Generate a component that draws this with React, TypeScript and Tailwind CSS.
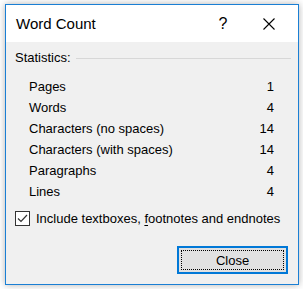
import * as React from "react"

const stats: [string, string][] = [
  ["Pages", "1"],
  ["Words", "4"],
  ["Characters (no spaces)", "14"],
  ["Characters (with spaces)", "14"],
  ["Paragraphs", "4"],
  ["Lines", "4"],
]

const App: React.FC = () => {
  return (
    <main className="w-[303px] h-[289px] bg-white pt-[4px] pl-[5px] font-['Liberation_Sans',Arial,sans-serif] text-black">
      <div className="w-[294px] h-[281px] border border-[#1a7fd4] flex flex-col shadow-[0_0_7px_rgba(0,0,0,0.3)]">
        {/* title bar */}
        <div className="h-[37px] bg-white flex items-center">
          <div className="flex-1 pl-[10px] text-[15px] leading-none">Word Count</div>
          <div className="w-[46px] text-center text-[16px] leading-none">?</div>
          <div className="w-[46px] mr-[6px] flex justify-center">
            <svg width="12" height="12" viewBox="0 0 12 12">
              <path d="M0.5 0.5 L11.5 11.5 M11.5 0.5 L0.5 11.5" stroke="#000" strokeWidth="1.1" />
            </svg>
          </div>
        </div>

        {/* body */}
        <div className="flex-1 bg-[#f0f0f0] flex flex-col text-[13px]">
          <div className="pt-[8px] pl-[9px] pr-[7px] flex items-center h-[24px]">
            <span className="leading-[16px]">Statistics:</span>
            <div className="flex-1 ml-[5px] h-px bg-[#d7d7d7]" />
          </div>

          <div className="mt-[10px] pl-[23px] pr-[24px]">
            {stats.map(([label, value]) => (
              <div key={label} className="h-[21px] leading-[21px] flex justify-between">
                <span>{label}</span>
                <span>{value}</span>
              </div>
            ))}
          </div>

          <div className="mt-[9px] pl-[9px] flex items-center h-[15px]">
            <div className="w-[15px] h-[15px] border border-[#333] bg-white flex items-center justify-center">
              <svg width="11" height="9" viewBox="0 0 11 9">
                <path d="M1 4.5 L4 7.5 L10 1" stroke="#333" strokeWidth="1.2" fill="none" />
              </svg>
            </div>
            <span className="ml-[6px] leading-[16px]">
              Include textboxes, <span className="underline underline-offset-2">f</span>ootnotes and endnotes
            </span>
          </div>

          <div className="mt-auto mb-[10px] mr-[10px] self-end">
            <button className="w-[111px] h-[28px] border-2 border-[#0078d7] bg-[#e1e1e1] p-[2px] flex">
              <span className="flex-1 border border-dotted border-black flex items-center justify-center text-[13px] leading-none">
                Close
              </span>
            </button>
          </div>
        </div>
      </div>
    </main>
  )
}

export default App
